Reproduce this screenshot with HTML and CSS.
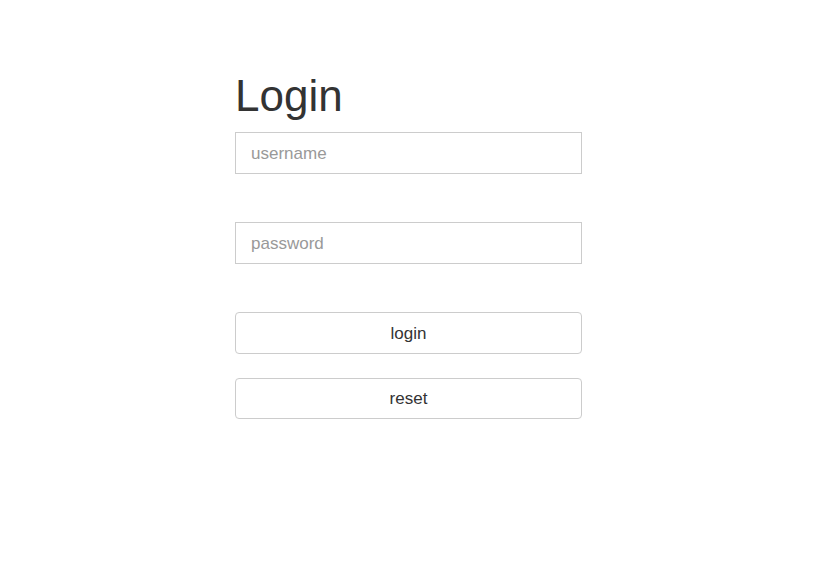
FILE: index.html
```html
<!DOCTYPE html>
<html lang="en">
<head>
    <meta charset="UTF-8">
    <meta name="viewport" content="width=device-width, initial-scale=1.0">
    <title>Login</title>
    <link rel="stylesheet" href="styles.css">
</head>
<body>
    <form class="login-form" onsubmit="return false">
        <h1>Login</h1>
        <input type="text" class="field" placeholder="username">
        <input type="password" class="field" placeholder="password">
        <button type="submit" class="btn">login</button>
        <button type="reset" class="btn">reset</button>
    </form>
</body>
</html>
```

FILE: styles.css
```css
html, body {
    margin: 0;
    padding: 0;
}

body {
    background-color: #fff;
    font-family: "Liberation Sans", Arial, sans-serif;
    color: #333;
    padding-right: 2px;
}

.login-form {
    width: 347px;
    margin: 0 auto;
    padding-top: 72px;
    display: flex;
    flex-direction: column;
}

h1 {
    font-size: 44px;
    font-weight: normal;
    line-height: 1.1;
    margin: 0 0 12px;
    color: #333;
}

.field {
    box-sizing: border-box;
    height: 42px;
    padding: 2px 15px 0;
    margin-bottom: 48px;
    border: 1px solid #ccc;
    border-radius: 0;
    font-family: inherit;
    font-size: 17px;
    color: #333;
    outline: none;
}

.field::placeholder {
    color: #999;
}

.btn {
    box-sizing: border-box;
    height: 42px;
    padding: 2px 0 0;
    margin-bottom: 24px;
    background-color: #fff;
    border: 1px solid #ccc;
    border-radius: 4px;
    font-family: inherit;
    font-size: 17px;
    color: #333;
    cursor: pointer;
}

.btn:last-child {
    height: 41px;
    padding-top: 1px;
}

.btn:hover {
    background-color: #e6e6e6;
}
```
